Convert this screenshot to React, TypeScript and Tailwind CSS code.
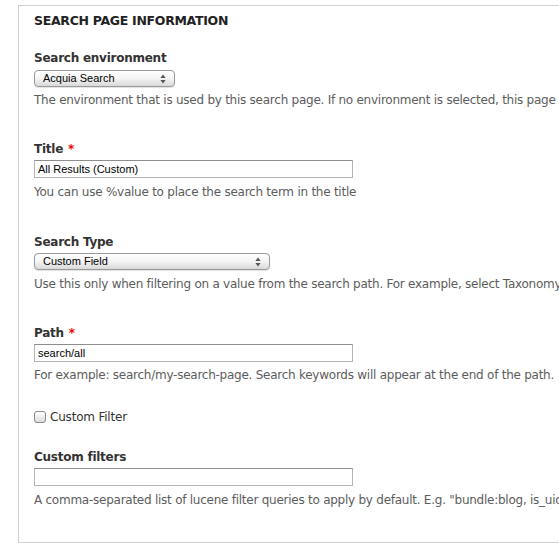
import React from "react";

const font = "font-['DejaVu_Sans',Verdana,sans-serif]";

const Arrows = () => (
  <svg width="6" height="10" viewBox="0 0 6 10" className="shrink-0">
    <path d="M3 0.5 L5.6 4 L0.4 4 Z" fill="#555" />
    <path d="M3 9.5 L5.6 6 L0.4 6 Z" fill="#555" />
  </svg>
);

const Select = ({ value, width }: { value: string; width: string }) => (
  <div
    className={`${width} h-[17px] flex items-center justify-between rounded-[4px] border border-[#9a9a9a] bg-gradient-to-b from-white via-[#f4f4f4] to-[#d9d9d9] pl-[8px] pr-[8px] shadow-[0_1px_1px_rgba(0,0,0,0.12)]`}
  >
    <span className="font-['Liberation_Sans',Arial,sans-serif] text-[11px] leading-none text-black">
      {value}
    </span>
    <Arrows />
  </div>
);

const Input = ({ value }: { value?: string }) => (
  <div className="w-[319px] h-[18px] flex items-center border border-[#b4b4b4] border-t-[#8e8e8e] bg-white pl-[3px]">
    <span className="font-['Liberation_Sans',Arial,sans-serif] text-[11px] leading-none text-black">
      {value}
    </span>
  </div>
);

const Label = ({ text, required }: { text: string; required?: boolean }) => (
  <div className="pt-[1px] text-[12px] leading-[18px] font-bold text-[#333] tracking-[-0.25px]">
    {text}
    {required && <span className="ml-[5px] text-[#e00] text-[12px]">*</span>}
  </div>
);

const Desc = ({ children }: { children: React.ReactNode }) => (
  <div className="text-[12px] leading-[18px] text-[#5c5c5c] whitespace-nowrap tracking-[-0.25px]">
    {children}
  </div>
);

export default function App() {
  return (
    <div className={`w-[559px] h-[543px] overflow-hidden bg-white ${font}`}>
      <div className="ml-[18px] mt-[5px] w-[600px] h-[538px] border border-[#cfcfcf] pl-[15px] pt-[6px]">
        <div className="text-[12.5px] leading-[18px] font-bold text-[#222] uppercase tracking-[-0.3px]">
          Search page information
        </div>

        <div className="mt-[18px]">
          <Label text="Search environment" />
          <div className="mt-[3px]">
            <Select value="Acquia Search" width="w-[141px]" />
          </div>
          <div className="mt-[4px]">
            <Desc>
              The environment that is used by this search page. If no environment is selected, this page will use the default environment.
            </Desc>
          </div>
        </div>

        <div className="mt-[30px]">
          <Label text="Title" required />
          <div className="mt-[2px]">
            <Input value="All Results (Custom)" />
          </div>
          <div className="mt-[5px]">
            <Desc>You can use %value to place the search term in the title</Desc>
          </div>
        </div>

        <div className="mt-[31px]">
          <Label text="Search Type" />
          <div className="mt-[2px]">
            <Select value="Custom Field" width="w-[236px]" />
          </div>
          <div className="mt-[5px]">
            <Desc>
              Use this only when filtering on a value from the search path. For example, select Taxonomy Term to filter on a term ID.
            </Desc>
          </div>
        </div>

        <div className="mt-[30px]">
          <Label text="Path" required />
          <div className="mt-[2px]">
            <Input value="search/all" />
          </div>
          <div className="mt-[4px]">
            <Desc>
              For example: search/my-search-page. Search keywords will appear at the end of the path.
            </Desc>
          </div>
        </div>

        <label className="mt-[24px] flex items-center gap-[4px]">
          <span className="w-[12px] h-[12px] rounded-[3px] border border-[#8a8a8a] bg-gradient-to-b from-white to-[#dcdcdc]" />
          <span className="text-[12px] leading-[18px] text-[#333] tracking-[-0.2px]">Custom Filter</span>
        </label>

        <div className="mt-[21px]">
          <Label text="Custom filters" />
          <div className="mt-[2px]">
            <Input />
          </div>
          <div className="mt-[5px]">
            <Desc>
              A comma-separated list of lucene filter queries to apply by default. E.g. "bundle:blog, is_uid:1"
            </Desc>
          </div>
        </div>
      </div>
    </div>
  );
}
